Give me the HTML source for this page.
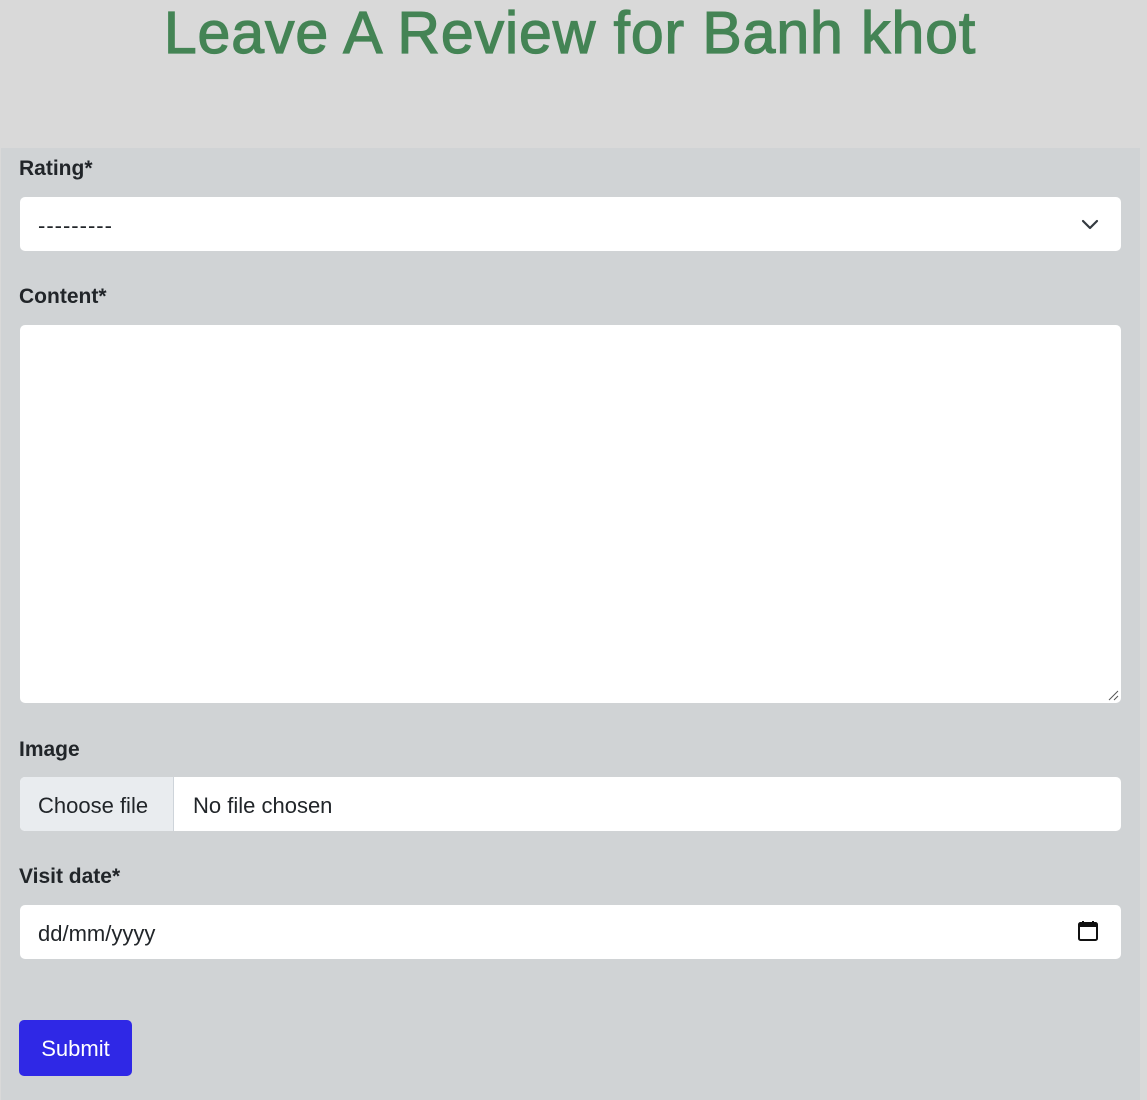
<!DOCTYPE html>
<html><head><style>
body{margin:0;background:#d9d9d9;font-family:"Liberation Sans",sans-serif;width:1147px;height:1100px;overflow:hidden;position:relative;color:#212529}
h1{position:absolute;top:1px;left:0;width:1140px;margin:0;text-align:center;font-size:59px;font-weight:normal;color:#448455;line-height:64px;-webkit-text-stroke:1.2px #448455;letter-spacing:0.9px}
.panel{position:absolute;left:1px;top:148px;width:1139px;height:952px;background:#d0d3d5}
.lbl{position:absolute;left:19px;font-weight:bold;font-size:21px}
.box{position:absolute;left:20px;width:1101px;background:#fff;border-radius:5px;font-size:22px}
</style></head><body>
<h1>Leave A Review for Banh khot</h1>
<div class="panel"></div>
<div class="lbl" style="top:157px">Rating*</div>
<div class="box" style="top:197px;height:54px"><span style="position:absolute;left:18px;top:16px;letter-spacing:1px">---------</span>
<svg style="position:absolute;right:22px;top:20px" width="18" height="14" viewBox="0 0 18 14"><path d="M2 4l7 7 7-7" fill="none" stroke="#343a40" stroke-width="2.2" stroke-linecap="round" stroke-linejoin="round"/></svg></div>
<div class="lbl" style="top:285px">Content*</div>
<div class="box" style="top:325px;height:378px"><svg style="position:absolute;right:2px;bottom:2px" width="12" height="12"><path d="M11 2L2 11M11 7L7 11" stroke="#555" stroke-width="1"/></svg></div>
<div class="lbl" style="top:738px">Image</div>
<div class="box" style="top:777px;height:54px;overflow:hidden"><span style="position:absolute;left:0;top:0;width:153px;height:54px;background:#e9ecef;border-right:1px solid #ced4da"></span><span style="position:absolute;left:18px;top:16px">Choose file</span><span style="position:absolute;left:173px;top:16px">No file chosen</span></div>
<div class="lbl" style="top:865px">Visit date*</div>
<div class="box" style="top:905px;height:54px"><span style="position:absolute;left:18px;top:16px">dd/mm/yyyy</span>
<svg style="position:absolute;right:23px;top:15px" width="20" height="22" viewBox="0 0 20 22"><rect x="1" y="3" width="18" height="17" rx="1.5" fill="none" stroke="#111" stroke-width="2"/><rect x="1" y="3" width="18" height="4" fill="#111"/><path d="M5 1v3M15 1v3" stroke="#111" stroke-width="2"/></svg></div>
<div style="position:absolute;left:19px;top:1020px;width:113px;height:56px;background:#2f28e6;border-radius:5px;color:#fff;font-size:22px;line-height:58px;text-align:center">Submit</div>
</body></html>
